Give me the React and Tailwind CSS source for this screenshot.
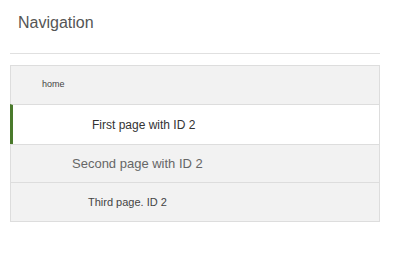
import React from 'react';

const items = [
  { label: 'home', pad: 'pl-[31px]', text: 'text-[9px] text-[#444]', bg: 'bg-[#f2f2f2]', h: 'h-[38px]' },
  { label: 'First page with ID 2', pad: 'pl-[79px]', text: 'text-[12px] text-[#333]', bg: 'bg-white', h: 'h-[40px]', active: true },
  { label: 'Second page with ID 2', pad: 'pl-[61px]', text: 'text-[13px] text-[#666]', bg: 'bg-[#f2f2f2]', h: 'h-[38px]' },
  { label: 'Third page. ID 2', pad: 'pl-[77px]', text: 'text-[11px] text-[#444]', bg: 'bg-[#f2f2f2]', h: 'h-[39px]' },
];

function App() {
  return (
    <div className="w-[403px] h-[255px] bg-white font-['Liberation_Sans',Arial,sans-serif] overflow-hidden">
      <div className="pl-[18px] pt-[14px] h-[53px] text-[16px] leading-[18px] text-[#555]">Navigation</div>
      <div className="mx-[10px] w-[370px] border-t border-[#e0e0e0]"></div>
      <div className="mt-[11px] mx-[10px] w-[370px] border border-[#dddddd]">
        {items.map((it, i) => (
          <div
            key={i}
            className={`flex items-center ${it.h} ${it.bg} ${it.pad} ${i > 0 ? 'border-t border-[#dddddd]' : ''} ${
              it.active ? 'border-l-[3px] border-l-[#4a7a2c] -ml-px' : ''
            }`}
          >
            <span className={it.text}>{it.label}</span>
          </div>
        ))}
      </div>
    </div>
  );
}

export default App;
